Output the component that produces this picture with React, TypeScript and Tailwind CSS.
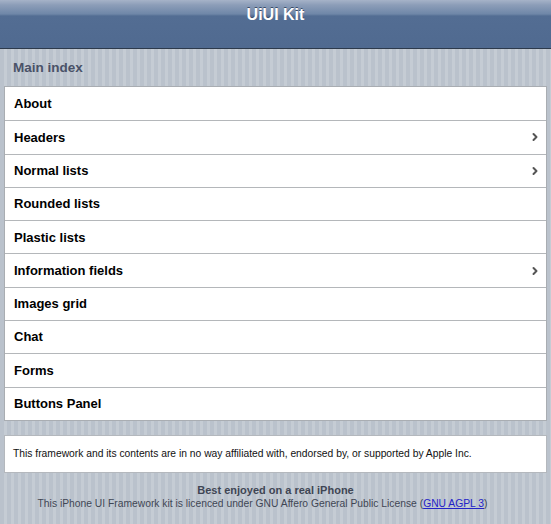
import { ChevronRight } from 'lucide-react';

const items = [
  { label: 'About' },
  { label: 'Headers', more: true },
  { label: 'Normal lists', more: true },
  { label: 'Rounded lists' },
  { label: 'Plastic lists' },
  { label: 'Information fields', more: true },
  { label: 'Images grid' },
  { label: 'Chat' },
  { label: 'Forms' },
  { label: 'Buttons Panel' },
];

export default function App() {
  return (
    <div className="min-h-[524px] w-[551px] font-['Liberation_Sans',Arial,sans-serif] bg-[repeating-linear-gradient(90deg,#bac2cc_0_4px,#c5ccd4_4px_7px)]">
      {/* toolbar */}
      <div className="h-[49px] border-b border-[#2d3a4c] bg-[linear-gradient(180deg,#a6b3c8_0px,#8c9db8_5px,#6f87a8_14px,#536d93_16px,#506a90_100%)]">
        <h1 className="pt-[5px] text-center text-[16px] leading-[20px] font-bold text-white [text-shadow:0_-1px_0_#3a4c66]">
          UiUI Kit
        </h1>
      </div>

      <div className="px-[13px] pt-[9px] pb-[8px] text-[13.5px] leading-[20px] font-bold text-[#4a5268]">
        Main index
      </div>

      {/* main list */}
      <ul className="mx-[4px] border border-[#a9adb2] bg-white">
        {items.map((it, i) => (
          <li
            key={it.label}
            className={`flex h-[33.3px] items-center justify-between pl-[9px] pr-[5px] ${i > 0 ? 'border-t border-[#b4b7ba]' : ''}`}
          >
            <span className="text-[13px] font-bold text-black">{it.label}</span>
            {it.more && <ChevronRight className="h-[12px] w-[12px] text-[#555]" strokeWidth={4} />}
          </li>
        ))}
      </ul>

      {/* disclaimer */}
      <div className="mx-[4px] mt-[14px] flex h-[38px] items-center border border-[#b4b8bd] bg-white px-[8px] text-[10.3px] text-[#111]">
        This framework and its contents are in no way affiliated with, endorsed by, or supported by Apple Inc.
      </div>

      <div className="pt-[11px] text-center text-[10.3px] leading-[13px] text-[#3f4654]">
        <div className="text-[11px] font-bold">Best enjoyed on a real iPhone</div>
        <div className="pr-[26px]">
          This iPhone UI Framework kit is licenced under GNU Affero General Public License (
          <a className="text-[#2323c8] underline">GNU AGPL 3</a>)
        </div>
      </div>
    </div>
  );
}
